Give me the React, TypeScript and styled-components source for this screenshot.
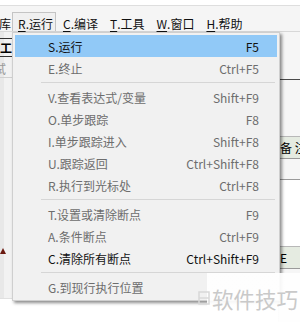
import { FC } from "react";
import styled, { createGlobalStyle } from "styled-components";

type Item = { label: string; key: string; active?: boolean; hot?: boolean };
type Entry = Item | "sep";

const entries: Entry[] = [
  { label: "S.运行", key: "F5", active: true, hot: true },
  { label: "E.终止", key: "Ctrl+F5" },
  "sep",
  { label: "V.查看表达式/变量", key: "Shift+F9" },
  { label: "O.单步跟踪", key: "F8" },
  { label: "I.单步跟踪进入", key: "Shift+F8" },
  { label: "U.跟踪返回", key: "Ctrl+Shift+F8" },
  { label: "R.执行到光标处", key: "Ctrl+F8" },
  "sep",
  { label: "T.设置或清除断点", key: "F9" },
  { label: "A.条件断点", key: "Ctrl+F9" },
  { label: "C.清除所有断点", key: "Ctrl+Shift+F9", active: true },
  "sep",
  { label: "G.到现行执行位置", key: "" },
];

const menus = [
  { m: "R", rest: ".运行", open: true },
  { m: "C", rest: ".编译" },
  { m: "T", rest: ".工具" },
  { m: "W", rest: ".窗口" },
  { m: "H", rest: ".帮助" },
];

const App: FC = () => {
  return (
    <>
      <GlobalStyle />
      <Page>
        <TopStrip />
        <MenuBar>
          <CutLabel>库</CutLabel>
          {menus.map((x) => (
            <MenuTitle key={x.m} $open={x.open}>
              <u>{x.m}</u>
              {x.rest}
            </MenuTitle>
          ))}
        </MenuBar>
        <Body>
          <LeftPane>
            <ToolRow>工</ToolRow>
            <FaintRow>试</FaintRow>
            <Spacer />
            <Marker>
              <svg width="6" height="6" viewBox="0 0 6 6">
                <path d="M0 6 L3 0 L6 6 Z" fill="#6b1a10" />
              </svg>
            </Marker>
          </LeftPane>
          <Center />
          <RightPane>
            <PaneBlock $h={47} $line="#4a4a4a" />
            <PaneBlock $h={55} />
            <Caption>备 注</Caption>
            <PaneBlock $h={20} $line="#9a9a9a" />
            <PaneBlock $h={65} $bg="#ffffff" />
            <Caption>E</Caption>
          </RightPane>
        </Body>

        <Dropdown>
          {entries.map((e, i) =>
            e === "sep" ? (
              <Separator key={i} />
            ) : (
              <Row key={i} $hot={e.hot} $active={e.active}>
                <span>{e.label}</span>
                <span>{e.key}</span>
              </Row>
            )
          )}
        </Dropdown>

        <Watermark>
          <svg width="12" height="16" viewBox="0 0 12 16">
            <rect x="1" y="2" width="10" height="12" fill="none" stroke="#d8d8d8" strokeWidth="1.5" />
            <path d="M1 8 H11" stroke="#d8d8d8" strokeWidth="1.5" />
          </svg>
          <span>软件技巧</span>
        </Watermark>
      </Page>
    </>
  );
};

export default App;

const GlobalStyle = createGlobalStyle`
  body {
    margin: 0;
    background: #ffffff;
    font-family: "Noto Sans CJK SC", "Noto Sans", sans-serif;
  }
`;

const Page = styled.div`
  position: relative;
  width: 300px;
  height: 322px;
  overflow: hidden;
  display: flex;
  flex-direction: column;
  background: #ffffff;
`;

const TopStrip = styled.div`
  height: 5px;
  flex-shrink: 0;
  background: #ffffff;
  border-bottom: 1px solid #dedede;
`;

const MenuBar = styled.div`
  height: 26px;
  flex-shrink: 0;
  box-sizing: border-box;
  padding-top: 6px;
  display: flex;
  align-items: stretch;
  background: #f5f5f5;
  font-size: 12px;
  color: #111;
  border-bottom: 1px solid #d8d8d8;
`;

const CutLabel = styled.div`
  width: 12px;
  display: flex;
  align-items: center;
  padding-top: 3px;
  text-indent: -1px;
  overflow: hidden;
`;

const MenuTitle = styled.div<{ $open?: boolean }>`
  display: flex;
  align-items: center;
  padding: 3px ${(p) => (p.$open ? "2px" : "5px")} 0 5px;
  margin-right: ${(p) => (p.$open ? "1px" : "0")};
  border: 1px solid ${(p) => (p.$open ? "#c4c4c4" : "transparent")};
  border-bottom: none;
  background: ${(p) => (p.$open ? "#f0f0f0" : "transparent")};
  u {
    text-underline-offset: 2px;
  }
`;

const Body = styled.div`
  flex: 1;
  display: flex;
`;

const LeftPane = styled.div`
  width: 12px;
  height: 266px;
  display: flex;
  flex-direction: column;
  background: linear-gradient(to right, #e8e8e8 0 4px, #f2f2f2 4px);
  border-bottom: 1px solid #e0e0e0;
`;

const ToolRow = styled.div`
  margin-top: 6px;
  height: 17px;
  font-size: 12px;
  font-weight: 700;
  line-height: 17px;
  color: #000;
  border-top: 1px solid #333;
  border-bottom: 1px solid #333;
  overflow: hidden;
`;

const FaintRow = styled.div`
  margin-top: 4px;
  height: 16px;
  font-size: 12px;
  line-height: 16px;
  color: #9a9a9a;
  border-bottom: 1px solid #d0d0d0;
  overflow: hidden;
  text-indent: -6px;
`;

const Spacer = styled.div`
  flex: 1;
`;

const Marker = styled.div`
  height: 50px;
  display: flex;
  align-items: flex-start;
`;

const Center = styled.div`
  flex: 1;
  background: #ffffff;
`;

const RightPane = styled.div`
  width: 21px;
  display: flex;
  flex-direction: column;
  background: #f6f6f6;
  border-left: 1px solid #e2e2e2;
`;

const PaneBlock = styled.div<{ $h: number; $line?: string; $bg?: string }>`
  height: ${(p) => p.$h}px;
  flex-shrink: 0;
  background: ${(p) => p.$bg ?? "transparent"};
  border-bottom: 1px solid ${(p) => p.$line ?? "transparent"};
`;

const Caption = styled.div`
  height: 21px;
  flex-shrink: 0;
  background: #e5ebe1;
  border-top: 1px solid #b8b8b8;
  border-bottom: 1px solid #9a9a9a;
  font-size: 12px;
  line-height: 21px;
  color: #000;
  white-space: nowrap;
  padding-left: 1px;
  overflow: hidden;
`;

const Dropdown = styled.div`
  position: absolute;
  left: 12px;
  top: 32px;
  width: 262px;
  padding: 2px;
  background: #f1f1f1;
  border: 1px solid #cfcfcf;
  box-shadow: 2px 2px 3px rgba(0, 0, 0, 0.45);
  font-size: 12px;
`;

const Row = styled.div<{ $hot?: boolean; $active?: boolean }>`
  height: 22px;
  display: flex;
  align-items: center;
  justify-content: space-between;
  padding: 0 18px 0 33px;
  background: ${(p) => (p.$hot ? "#91c9f7" : "transparent")};
  color: ${(p) => (p.$active ? "#111111" : "#6d6d6d")};
`;

const Separator = styled.div`
  height: 7px;
  display: flex;
  align-items: center;
  margin: 0 2px 0 26px;
  &::after {
    content: "";
    flex: 1;
    height: 1px;
    background: #d6d6d6;
  }
`;

const Watermark = styled.div`
  position: absolute;
  left: 197px;
  top: 273px;
  width: 103px;
  height: 49px;
  display: flex;
  align-items: center;
  gap: 2px;
  padding-left: 1px;
  box-sizing: border-box;
  background: linear-gradient(to right, rgba(255, 255, 255, 0) 0 10px, rgba(255, 255, 255, 0.92) 10px);
  span {
    font-size: 21.5px;
    color: #c9c9c9;
    margin-top: 2px;
  }
`;
